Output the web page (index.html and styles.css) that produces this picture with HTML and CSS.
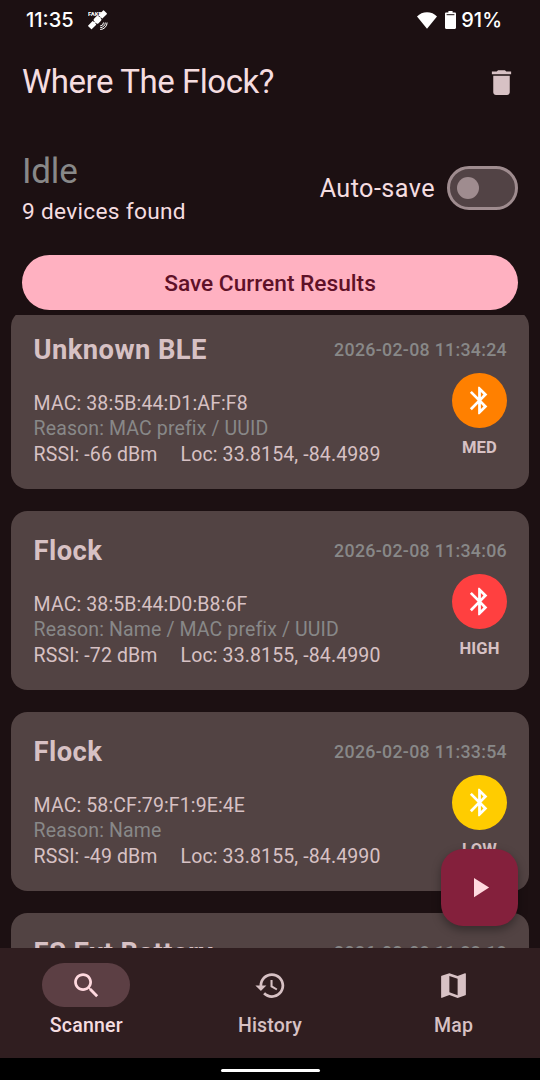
FILE: index.html
```html
<!DOCTYPE html>
<html lang="en">
<head>
    <meta charset="UTF-8">
    <meta name="viewport" content="width=device-width, initial-scale=1.0">
    <title>Where The Flock?</title>
    <link rel="stylesheet" href="styles.css">
</head>
<body>
    <!-- shared icon shapes -->
    <svg class="sprites" width="0" height="0">
        <symbol id="bluetooth" viewBox="0 0 24 24">
            <path d="M17.71 7.71L12 2h-1v7.59L6.41 5 5 6.41 10.59 12 5 17.59 6.41 19 11 14.41V22h1l5.71-5.71-4.3-4.29 4.3-4.29zM13 5.83l1.88 1.88L13 9.59V5.83zm1.88 10.46L13 18.17v-3.76l1.88 1.88z"/>
        </symbol>
    </svg>

    <div class="status-bar">
        <div class="status-left">
            <span>11:35</span>
            <svg class="satellite" viewBox="0 0 20 20">
                <text x="0" y="5.6">FAKE</text>
                <g transform="rotate(-45 9.5 9.8)">
                    <rect x="-1.6" y="7.2" width="7" height="5.2" rx="0.6"/>
                    <rect x="6.2" y="6.6" width="6.6" height="6.4" rx="1.6"/>
                    <rect x="13.6" y="7.2" width="7" height="5.2" rx="0.6"/>
                    <rect x="5" y="9.2" width="9" height="1.2"/>
                </g>
                <path class="wave" d="M12.2 15.9a3.4 3.4 0 0 0 3.3-3.4M12.2 17.7a5.2 5.2 0 0 0 5.1-5.2M12.2 19.5a7 7 0 0 0 6.9-7"/>
            </svg>
        </div>
        <div class="status-right">
            <svg class="wifi" viewBox="0 0 20 17"><path d="M10 16.8L0 4.4C2.600 1.700 6.100 0.200 10 0.200s7.400 1.500 10 4.200z"/></svg>
            <svg class="battery" viewBox="0 0 11 18"><path d="M3.400 0h4.200v1.600h2.200c.7 0 1.200.5 1.200 1.200v14c0 .7-.5 1.200-1.200 1.200H1.200C.5 18 0 17.500 0 16.800v-14c0-.7.5-1.200 1.200-1.200h2.200z"/><path class="level" d="M1.600 3.700h7.800"/></svg>
            <span>91%</span>
        </div>
    </div>

    <header>
        <h1>Where The Flock?</h1>
        <svg class="icon" viewBox="0 0 24 24"><path d="M6 19c0 1.100.9 2 2 2h8c1.100 0 2-.9 2-2V7H6v12zM19 4h-3.500l-1-1h-5l-1 1H5v2h14V4z"/></svg>
    </header>

    <div class="summary">
        <div class="counts">
            <div class="state">Idle</div>
            <div class="found">9 devices found</div>
        </div>
        <div class="autosave">
            <span>Auto-save</span>
            <div class="switch"><div class="knob"></div></div>
        </div>
    </div>

    <button class="save">Save Current Results</button>

    <main class="list">
        <div class="card">
            <div class="card-top">
                <h2>Unknown BLE</h2>
                <span class="date">2026-02-08 11:34:24</span>
            </div>
            <div class="card-body">
                <div class="details">
                    <p>MAC: 38:5B:44:D1:AF:F8</p>
                    <p class="reason">Reason: MAC prefix / UUID</p>
                    <p class="signal"><span>RSSI: -66 dBm</span><span>Loc: 33.8154, -84.4989</span></p>
                </div>
                <div class="level-box">
                    <div class="badge med"><svg class="icon"><use href="#bluetooth"/></svg></div>
                    <span>MED</span>
                </div>
            </div>
        </div>

        <div class="card">
            <div class="card-top">
                <h2>Flock</h2>
                <span class="date">2026-02-08 11:34:06</span>
            </div>
            <div class="card-body">
                <div class="details">
                    <p>MAC: 38:5B:44:D0:B8:6F</p>
                    <p class="reason">Reason: Name / MAC prefix / UUID</p>
                    <p class="signal"><span>RSSI: -72 dBm</span><span>Loc: 33.8155, -84.4990</span></p>
                </div>
                <div class="level-box">
                    <div class="badge high"><svg class="icon"><use href="#bluetooth"/></svg></div>
                    <span>HIGH</span>
                </div>
            </div>
        </div>

        <div class="card">
            <div class="card-top">
                <h2>Flock</h2>
                <span class="date">2026-02-08 11:33:54</span>
            </div>
            <div class="card-body">
                <div class="details">
                    <p>MAC: 58:CF:79:F1:9E:4E</p>
                    <p class="reason">Reason: Name</p>
                    <p class="signal"><span>RSSI: -49 dBm</span><span>Loc: 33.8155, -84.4990</span></p>
                </div>
                <div class="level-box">
                    <div class="badge low"><svg class="icon"><use href="#bluetooth"/></svg></div>
                    <span>LOW</span>
                </div>
            </div>
        </div>

        <div class="card">
            <div class="card-top">
                <h2>FS Ext Battery</h2>
                <span class="date">2026-02-08 11:33:18</span>
            </div>
        </div>
    </main>

    <button class="fab">
        <svg class="icon" viewBox="0 0 24 24"><path d="M8 5v14l11-7z"/></svg>
    </button>

    <nav>
        <div class="tab active">
            <div class="pill"><svg class="icon" viewBox="0 0 24 24"><path d="M15.500 14h-.79l-.28-.27C15.410 12.590 16 11.110 16 9.500 16 5.910 13.090 3 9.500 3S3 5.910 3 9.500 5.910 16 9.500 16c1.610 0 3.090-.59 4.230-1.570l.27.28v.79l5 4.990L20.490 19l-4.990-5zm-6 0C7.010 14 5 11.990 5 9.500S7.010 5 9.500 5 14 7.010 14 9.500 11.990 14 9.500 14z"/></svg></div>
            <span>Scanner</span>
        </div>
        <div class="tab">
            <div class="pill"><svg class="icon" viewBox="0 0 24 24"><path d="M13 3c-4.970 0-9 4.030-9 9H1l3.890 3.890.07.14L9 12H6c0-3.870 3.130-7 7-7s7 3.130 7 7-3.130 7-7 7c-1.930 0-3.680-.79-4.940-2.060l-1.420 1.420C8.270 19.990 10.510 21 13 21c4.970 0 9-4.030 9-9s-4.030-9-9-9zm-1 5v5l4.280 2.540.72-1.210-3.500-2.080V8H12z"/></svg></div>
            <span>History</span>
        </div>
        <div class="tab">
            <div class="pill"><svg class="icon" viewBox="0 0 24 24"><path d="M20.500 3l-.16.03L15 5.100 9 3 3.360 4.900c-.21.07-.36.25-.36.48V20.500c0 .28.22.5.5.5l.16-.03L9 18.900l6 2.100 5.640-1.900c.21-.07.36-.25.36-.48V3.500c0-.28-.22-.5-.5-.5zM15 19l-6-2.110V5l6 2.110V19z"/></svg></div>
            <span>Map</span>
        </div>
    </nav>

    <div class="gesture-area"><div class="handle"></div></div>
</body>
</html>
```

FILE: styles.css
```css
* {
    box-sizing: border-box;
}

body {
    position: relative;
    display: flex;
    flex-direction: column;
    width: 540px;
    height: 1080px;
    margin: 0;
    overflow: hidden;
    font-family: Roboto, sans-serif;
    background-color: #1c1012;
    color: #f5dde0;
}

h1, h2, p {
    margin: 0;
}

button {
    padding: 0;
    border: none;
    font-family: inherit;
}

svg {
    display: block;
    fill: currentColor;
}

.sprites {
    position: absolute;
}

.icon {
    width: 33px;
    height: 33px;
}

/* Status bar */
.status-bar {
    display: flex;
    justify-content: space-between;
    align-items: center;
    height: 40px;
    padding: 0 38px 0 26px;
    font-family: Inter, sans-serif;
    font-size: 20px;
    font-weight: 500;
    color: #fff;
}

.status-left, .status-right {
    display: flex;
    align-items: center;
}

.satellite {
    width: 20px;
    height: 20px;
    margin-left: 14px;
}

.satellite text {
    font-family: Roboto, sans-serif;
    font-size: 6px;
    font-weight: 700;
}

.satellite .wave {
    fill: none;
    stroke: #fff;
    stroke-width: 1;
}

.wifi {
    width: 20px;
    height: 17px;
}

.battery {
    width: 11px;
    height: 18px;
    margin: 0 5px 0 8px;
}

.battery .level {
    stroke: #1c1012;
    stroke-width: 1;
}

/* App bar */
header {
    display: flex;
    justify-content: space-between;
    align-items: center;
    height: 85px;
    padding: 0 22px;
}

header .icon {
    color: #d7c1c4;
}

h1 {
    padding-bottom: 3px;
    font-size: 33px;
    font-weight: 400;
    letter-spacing: -0.45px;
}

/* Scan state */
.summary {
    display: flex;
    justify-content: space-between;
    align-items: center;
    height: 126px;
    padding: 0 22px;
}

.counts {
    padding-top: 5px;
}

.state {
    font-size: 35px;
    line-height: 42px;
    letter-spacing: -0.2px;
    color: #888;
}

.found {
    font-size: 22.7px;
    line-height: 37px;
    letter-spacing: 0.3px;
}

.autosave {
    display: flex;
    align-items: center;
    font-size: 25.2px;
    letter-spacing: 0.44px;
}

.switch {
    display: flex;
    align-items: center;
    width: 71.5px;
    height: 44px;
    margin-left: 11.5px;
    padding-left: 7.5px;
    border: 3px solid #9f8c8f;
    border-radius: 22px;
    background-color: #524345;
}

.knob {
    width: 22px;
    height: 22px;
    border-radius: 50%;
    background-color: #9f8c8f;
}

.save {
    height: 55px;
    margin: 4px 22px 5px;
    padding-top: 1px;
    border-radius: 28px;
    font-size: 22.7px;
    font-weight: 500;
    letter-spacing: 0;
    background-color: #ffb1c1;
    color: #5f1128;
}

/* Device list, scrolled by a few pixels */
.list {
    flex: 1;
    min-height: 0;
    overflow: hidden;
    padding: 0 11px;
}

.card {
    height: 178.75px;
    margin-bottom: 22.25px;
    padding: 22px 22px 22px 22.6px;
    border-radius: 16.5px;
    background-color: #524343;
    color: #d7c1c4;
}

.card:first-child {
    margin-top: -5.2px;
}

.card-top {
    display: flex;
    justify-content: space-between;
    align-items: center;
    height: 36px;
}

h2 {
    font-size: 27.4px;
    font-weight: 700;
    letter-spacing: 0.4px;
}

.date {
    font-size: 17.8px;
    font-weight: 500;
    letter-spacing: 0.29px;
    color: #888;
}

.card-body {
    display: flex;
    justify-content: space-between;
    padding-top: 5px;
}

.details {
    padding-top: 18px;
    font-size: 19.5px;
    line-height: 25.5px;
    letter-spacing: 0.12px;
}

.reason {
    color: #888;
}

.signal {
    display: flex;
    gap: 23px;
}

.level-box {
    display: flex;
    flex-direction: column;
    align-items: center;
    font-size: 16.6px;
    font-weight: 700;
    line-height: 22px;
    letter-spacing: 0.15px;
}

.badge {
    display: flex;
    align-items: center;
    justify-content: center;
    width: 55px;
    height: 55px;
    margin-bottom: 9px;
    border-radius: 50%;
    color: #fff;
}

.med {
    background-color: #ff8000;
}

.high {
    background-color: #ff4040;
}

.low {
    background-color: #ffcc00;
}

/* Scan button floats over the list */
.fab {
    position: absolute;
    right: 22px;
    bottom: 154px;
    display: flex;
    align-items: center;
    justify-content: center;
    width: 77px;
    height: 77px;
    border-radius: 22px;
    background-color: #84203c;
    color: #ffd9df;
    box-shadow: 0 4px 10px rgba(0, 0, 0, 0.35);
}

/* Bottom navigation */
nav {
    display: flex;
    gap: 11px;
    height: 110px;
    padding-top: 15px;
    background-color: #301e20;
}

.tab {
    flex: 1;
    display: flex;
    flex-direction: column;
    align-items: center;
    font-size: 19.5px;
    font-weight: 500;
    line-height: 24px;
    letter-spacing: 0.2px;
    color: #d7c1c4;
}

.pill {
    display: flex;
    align-items: center;
    justify-content: center;
    width: 88px;
    height: 44px;
    margin-bottom: 7px;
    border-radius: 22px;
}

.active {
    color: #f5dde0;
}

.active .pill {
    background-color: #5c3f44;
    color: #ffd9df;
}

.gesture-area {
    display: flex;
    align-items: center;
    justify-content: center;
    height: 22px;
    padding-top: 2px;
    background-color: #000;
}

.handle {
    width: 99px;
    height: 3px;
    border-radius: 2px;
    background-color: #fff;
}
```
